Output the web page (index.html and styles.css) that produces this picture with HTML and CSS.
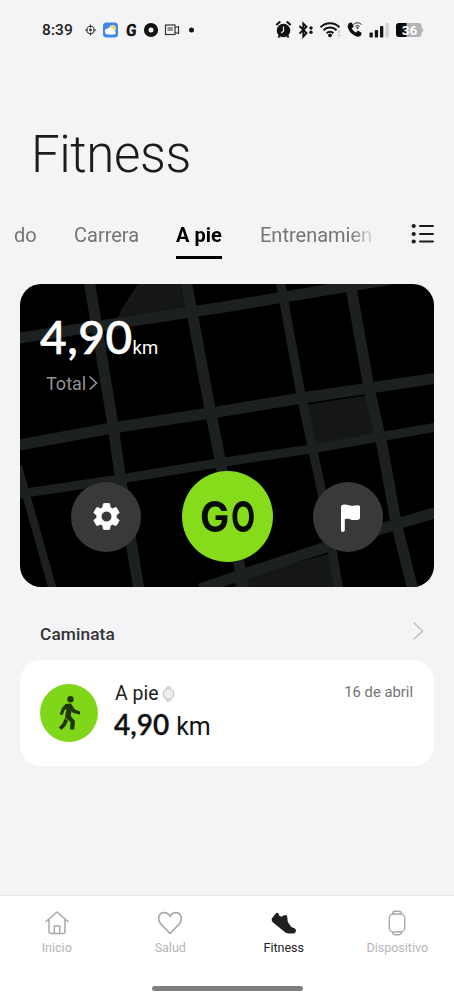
FILE: index.html
```html
<!DOCTYPE html>
<html lang="es">
<head>
<meta charset="utf-8">
<title>Fitness</title>
<link rel="stylesheet" href="styles.css">
</head>
<body>
<div class="screen">
  <header class="status">
    <span class="clock">8:39</span>
    <svg class="status-left" width="112" height="20" viewBox="0 0 112 20">
      <g fill="none" stroke="#333" stroke-width="1.1"><circle cx="6.5" cy="10" r="3.7"/><path d="M6.500 4.500v3M6.500 12.500v3M1 10h3M9 10h3"/></g>
      <circle cx="6.500" cy="10" r="1.400" fill="#333"/>
      <rect x="19" y="2.500" width="15" height="15" rx="3.500" fill="#3f86ea"/>
      <circle cx="28.500" cy="8.500" r="3.500" fill="#f7d774"/>
      <path d="M24 14.500a3 3 0 0 1-.2-6 4 4 0 0 1 6.500 2 2.200 2.200 0 0 1 .2 4z" fill="#fff"/>
      <text transform="translate(41.500 16) skewX(-5) scale(.92 1)" class="g-mark">G</text>
      <circle cx="67" cy="10" r="4.800" fill="none" stroke="#111" stroke-width="4.600"/>
      <g fill="none" stroke="#333" stroke-width="1.200"><rect x="81.500" y="5" width="9.500" height="9.500"/><path d="M83.500 8h5.500M83.500 10h5.500M91 7.500l3.500-1v7l-3.500-1"/></g>
      <circle cx="107.500" cy="10" r="2.500" fill="#111"/>
    </svg>
    <svg class="status-right" width="150" height="22" viewBox="0 0 150 22">
      <g fill="#111">
        <circle cx="8.500" cy="11.500" r="6.800"/>
        <path d="M4 15.500l-1.500 3h3zM13 15.500l1.500 3h-3z"/>
        <path d="M1.300 6l4-3.600M15.700 6l-4-3.600" stroke="#111" stroke-width="2"/>
        <path d="M8.500 7.500v4.500l-2.200 2" fill="none" stroke="#eee" stroke-width="1.200"/>
        <path d="M24.500 7l7 7-3.200 3.500v-13l3.200 3.200-7 7" fill="none" stroke="#111" stroke-width="1.900"/>
        <circle cx="36" cy="9" r="1.700"/><circle cx="36" cy="13.200" r="1.700"/>
      </g>
      <g fill="none" stroke="#151515" stroke-width="2"><path d="M45.500 8.200a13.300 13.300 0 0 1 19 0M48.500 11.400a9 9 0 0 1 13 0M51.600 14.200a5 5 0 0 1 6.800 0"/></g>
      <circle cx="55" cy="16.300" r="1.900" fill="#111"/>
      <path d="M64 11.500v6" stroke="#d2d2d4" stroke-width="2.500" stroke-dasharray="2.500 1"/>
      <path d="M74 4l2.800-.5 2 4-2 1.700c1 2.200 2.200 3.300 4.300 4.400l1.700-2 3.800 2.200-.5 2.500c-1 1.300-2.800 1.800-4.500 1.200-4.500-1.500-8.500-6-9-10.500z" fill="#111"/>
      <g fill="none" stroke="#222" stroke-width="1"><path d="M78.500 5.500a5.500 5.500 0 0 1 8 0M80.300 7.400a3.300 3.300 0 0 1 4.400 0"/></g>
      <circle cx="82.500" cy="8.700" r="1" fill="#111"/>
      <g fill="#151515"><rect x="94.500" y="13.500" width="3.300" height="5" rx=".8"/><rect x="99.800" y="11" width="3.300" height="7.500" rx=".8"/><rect x="105" y="7" width="3.300" height="11.500" rx=".8"/></g>
      <rect x="110.500" y="4" width="3.300" height="14.500" rx=".8" fill="#d2d2d4"/>
      <path d="M124 4h19.500a3 3 0 0 1 3 3v1l2 3-2 3v1a3 3 0 0 1-3 3H124a3 3 0 0 1-3-3V7a3 3 0 0 1 3-3z" fill="#b4b4b4"/>
      <path d="M124 4h7.500v14H124a3 3 0 0 1-3-3V7a3 3 0 0 1 3-3z" fill="#080808"/>
      <text x="134.500" y="15.800" class="battery">36</text>
    </svg>
  </header>

  <h1 class="title">Fitness</h1>

  <nav class="tabs">
    <div class="tab-strip">
      <span class="tab tab-cut">do</span>
      <span class="tab tab-run">Carrera</span>
      <span class="tab tab-active">A pie</span>
      <span class="tab tab-train">Entrenamien</span>
    </div>
    <svg class="list-icon" width="24" height="22" viewBox="0 0 24 22"><g fill="#1b1b1b"><circle cx="2.700" cy="3" r="2.100"/><circle cx="2.700" cy="11" r="2.100"/><circle cx="2.700" cy="18.500" r="2.100"/></g><path d="M9 3h13M9 11h13M9 18.500h13" stroke="#1b1b1b" stroke-width="2" stroke-linecap="round"/></svg>
  </nav>

  <section class="map-card">
    <svg class="map" width="414" height="303" viewBox="0 0 414 303">
      <g fill="#141716">
        <path d="M118 0h44l8 32-73 4 4-10z"/>
        <path d="M285 121l64-10 10 42-68 12z"/>
        <path d="M215 295l97-26 6 34H215z"/>
      </g>
      <g fill="none" stroke="#1c2020" stroke-width="11">
        <path d="M-3 54.500L204 23 390-8"/>
        <path d="M-3 161.500L92 144l105-16 85-14 135-20"/>
        <path d="M-2 210l102-15 104-17 87-13 126-22" stroke-width="9"/>
        <path d="M180 305l41-14 140-46 56-17"/>
        <path d="M69-4l24 145 7 50 19 115"/>
        <path d="M166-4l24 129 8 40 26 142"/>
        <path d="M260-4l21 115 20 93 18 102" stroke-width="9"/>
        <path d="M330-2l19 106 13 57 14 77 17 68"/>
        <path d="M-2 182l9 32 26 92" stroke-width="8"/>
      </g>
    </svg>
    <div class="card-body">
      <div class="distance"><span class="distance-num">4,90</span><span class="distance-unit">km</span></div>
      <div class="total"><span>Total</span><svg width="10" height="16" viewBox="0 0 10 16"><path d="M1.500 1.500L8.500 8l-7 6.500" fill="none" stroke="#999" stroke-width="1.500"/></svg></div>
      <div class="actions">
        <div class="round">
          <svg width="31" height="31" viewBox="0 0 24 24"><path fill="#fff" stroke="#fff" stroke-width=".7" stroke-linejoin="round" fill-rule="evenodd" d="M19.430 12.980c.04-.32.070-.640.070-.980s-.03-.660-.070-.980l2.110-1.650c.19-.150.240-.420.120-.640l-2-3.460c-.12-.220-.390-.300-.610-.220l-2.490 1c-.52-.400-1.080-.730-1.690-.980l-.380-2.650C14.460 2.180 14.250 2 14 2h-4c-.25 0-.46.180-.49.420l-.38 2.650c-.61.250-1.170.590-1.690.980l-2.490-1c-.23-.090-.49 0-.61.220l-2 3.460c-.13.220-.07.490.12.640l2.110 1.650c-.04.320-.07.650-.07.980s.03.660.07.980l-2.110 1.650c-.19.150-.24.420-.12.640l2 3.460c.12.220.39.300.61.220l2.490-1c.52.400 1.080.730 1.690.980l.38 2.650c.03.240.24.420.49.420h4c.25 0 .46-.18.490-.42l.38-2.650c.61-.25 1.170-.59 1.690-.98l2.490 1c.23.090.49 0 .61-.22l2-3.460c.12-.22.070-.49-.12-.64zM12 16.200a4.200 4.200 0 1 1 0-8.400 4.200 4.200 0 0 1 0 8.400z"/></svg>
        </div>
        <div class="go"><span class="go-g">G</span><span class="go-o">O</span></div>
        <div class="round round-flag">
          <svg width="22" height="30" viewBox="0 0 22 30"><path d="M2 3.500Q2 2 4 1.800c2-.5 3.500-.3 6 .4s5 .8 9 .1q2-.3 2 1.500v11q0 1.600-1.500 2c-4 .6-6.500.3-8.500-.6-2-.6-3.500-.5-5.200 0V27a1.900 1.900 0 0 1-3.800 0z" fill="#fff"/></svg>
        </div>
      </div>
    </div>
  </section>

  <div class="section-head"><h2>Caminata</h2><svg width="13" height="20" viewBox="0 0 13 20"><path d="M1.500 1.500L10.500 10l-9 8.500" fill="none" stroke="#c3c3c5" stroke-width="1.600"/></svg></div>

  <section class="record">
    <div class="walk">
      <svg width="24" height="38" viewBox="0 0 24 38">
        <circle cx="13.500" cy="5.300" r="3.200" fill="#20370b"/>
        <path d="M8.500 10L14 9.500l2 3.300 2 2.700 5 2v3l-7-1.500-1.500-2-.8 5 4.300 5-.8 8.500h-4.200l.5-7.500-5.500-4.500 1.500-8.800-2 1.500-1.800 4.800-3-.8 2.300-6.200z" fill="#20370b"/>
        <path d="M8 24l3 3-2.500 5-4 4-2.700-2.600 3.700-4z" fill="#20370b"/>
      </svg>
    </div>
    <div class="record-main">
      <div class="record-name">A pie<svg width="13" height="16" viewBox="0 0 13 16"><path d="M4.500 3V1h4v2M4.500 13v2h4v-2" fill="#ddd" stroke="#ccc"/><path d="M4.500 2.800h4l3 3v4.400l-3 3h-4l-3-3V5.800z" fill="#eee" stroke="#cbcbcb" stroke-width="1.300"/></svg></div>
      <div class="record-value"><b>4,90</b><span>km</span></div>
    </div>
    <span class="record-date">16 de abril</span>
  </section>

  <footer class="bottom">
    <nav class="nav">
      <div class="nav-item"><svg width="26" height="26" viewBox="0 0 26 26" fill="none" stroke="#a9a9a9" stroke-width="1.500" stroke-linecap="round" stroke-linejoin="round"><path d="M2 11.500L13 2l11 9.500M5 9.500v12q0 2 2 2h12q2 0 2-2v-12M10.300 23v-7h5.400v7"/></svg><span>Inicio</span></div>
      <div class="nav-item"><svg width="26" height="26" viewBox="0 0 26 26" fill="none" stroke="#a9a9a9" stroke-width="1.700" stroke-linejoin="round"><path d="M13 23.500L4 14.200C-.5 9 2 2.700 7.300 2.700c2.700 0 4.400 1.300 5.700 3.500 1.300-2.200 3-3.500 5.700-3.500C24 2.700 26.500 9 22 14.200z"/></svg><span>Salud</span></div>
      <div class="nav-item nav-active"><svg width="26" height="26" viewBox="0 0 26 26"><path d="M.8 8.500L5 3.200Q6.200 2 7.500 3.500l.8 2.300q2 1.500 4.200-.3l2.300-.5q1.700 0 1.500 2.500l.5 4.500 3.500 5 3.700 1.500q1.500 1.300.7 3.500-.7 1.500-3 1.500h-4q-2.700-.2-4.500-2L1.500 12Q.2 10 .8 8.500z" fill="#202020"/></svg><span>Fitness</span></div>
      <div class="nav-item"><svg width="26" height="26" viewBox="0 0 26 26" fill="none" stroke="#a9a9a9" stroke-width="1.400"><rect x="5.300" y="4" width="15.400" height="18" rx="4"/><path d="M8.500 4q.3-2.700 2.500-2.700h4q2.200 0 2.500 2.700M8.500 22q.3 2.700 2.500 2.700h4q2.200 0 2.500-2.700"/></svg><span>Dispositivo</span></div>
    </nav>
    <div class="handle"></div>
  </footer>
</div>
</body>
</html>
```
FILE: styles.css
```css
* { box-sizing: border-box; margin: 0; padding: 0; }
body { background: #f4f4f6; font-family: Roboto, "Liberation Sans", sans-serif; color: #111; }
svg { display: block; flex: none; }
.screen { width: 454px; height: 1000px; display: flex; flex-direction: column; overflow: hidden; }

.status { height: 59px; padding: 0 29px 0 42px; display: flex; align-items: center; }
.clock { font-size: 15.500px; font-weight: 500; width: 42px; color: #222; letter-spacing: .1px; }
.status-right { margin-left: auto; }
.g-mark { font: 900 17px Roboto, sans-serif; fill: #111; }
.battery { font: 700 13.500px Roboto, sans-serif; fill: #fff; text-anchor: middle; }

.title { margin: 66px 0 0 31px; height: 60px; line-height: 60px; font-size: 51px; font-weight: 300; color: #1c1c1c; letter-spacing: -.4px; }

.tabs { margin-top: 34px; height: 40px; padding: 0 19px 0 14px; display: flex; justify-content: space-between; }
.tab-strip { width: 364px; display: flex; white-space: nowrap; -webkit-mask-image: linear-gradient(to right, #000 335px, transparent 364px); mask-image: linear-gradient(to right, #000 335px, transparent 364px); }
.tab { flex: none; height: 40px; line-height: 32px; font-size: 20px; color: #747474; }
.tab-cut { width: 60px; }
.tab-run { width: 102px; }
.tab-active { width: 46px; margin-right: 38px; font-weight: 700; color: #000; border-bottom: 3px solid #000; }
.list-icon { margin-top: 4px; }

.map-card { margin: 25px 20px 0; height: 303px; flex: none; display: grid; background: #000; border-radius: 21px; overflow: hidden; }
.map, .card-body { grid-area: 1 / 1; }
.card-body { z-index: 1; padding: 25px 51px 25px; display: flex; flex-direction: column; }
.distance { margin-left: -31px; height: 56px; display: flex; align-items: baseline; color: #fff; line-height: 56px; }
.distance-num { font-family: Lato, sans-serif; font-size: 46px; font-weight: 500; letter-spacing: .5px; -webkit-text-stroke: .6px #fff; }
.distance-unit { font-size: 18.500px; }
.total { margin: 8px 0 0 -25px; height: 20px; display: flex; align-items: center; gap: 2px; font-size: 18px; color: #929292; }
.total svg { margin-top: -1px; }
.actions { margin-top: auto; display: flex; align-items: center; justify-content: space-between; }
.round { width: 70px; height: 70px; border-radius: 50%; background: #39393b; display: grid; place-items: center; }
.round-flag { padding: 2px 0 0 3px; }
.go { width: 91px; height: 91px; border-radius: 50%; background: #86dc1b; color: #070b03; display: flex; align-items: center; justify-content: center; font: 700 42px/91px Inter, sans-serif; }
.go-g { transform: scaleX(.93); }
.go-o { transform: scaleX(.75); margin: 0 -4px 0 -4px; }

.section-head { margin-top: 34px; height: 27px; padding: 0 29px 0 40px; display: flex; justify-content: space-between; }
.section-head h2 { font-size: 17.300px; line-height: 27px; font-weight: 500; color: #333; letter-spacing: .1px; }

.record { margin: 12px 20px 0; height: 106px; flex: none; padding: 21px 21px 0 20px; background: #fff; border-radius: 21px; display: flex; }
.walk { width: 58px; height: 58px; margin-top: 3px; border-radius: 50%; background: #80d719; display: grid; place-items: center; }
.record-main { margin-left: 16px; }
.record-name { display: flex; align-items: center; gap: 3px; height: 25px; padding-left: 1px; font-size: 19.500px; color: #222; }
.record-value { display: flex; align-items: baseline; gap: 7px; height: 36px; line-height: 36px; font-size: 25px; }
.record-value b { font-family: Lato, sans-serif; font-weight: 600; font-size: 28px; -webkit-text-stroke: .3px #111; }
.record-date { margin-left: auto; font-size: 14.800px; line-height: 22px; color: #747474; }

.bottom { margin-top: auto; height: 105px; background: #fff; border-top: 1px solid #e5e5e6; display: flex; flex-direction: column; align-items: center; }
.nav { width: 454px; display: grid; grid-template-columns: repeat(4, 113.500px); padding-top: 14px; height: 90px; }
.nav-item { display: flex; flex-direction: column; align-items: center; gap: 4px; font-size: 12.500px; line-height: 16px; color: #b5b5b5; }
.nav-active { color: #222; }
.handle { width: 151px; height: 5px; border-radius: 3px; background: #808080; }
```
